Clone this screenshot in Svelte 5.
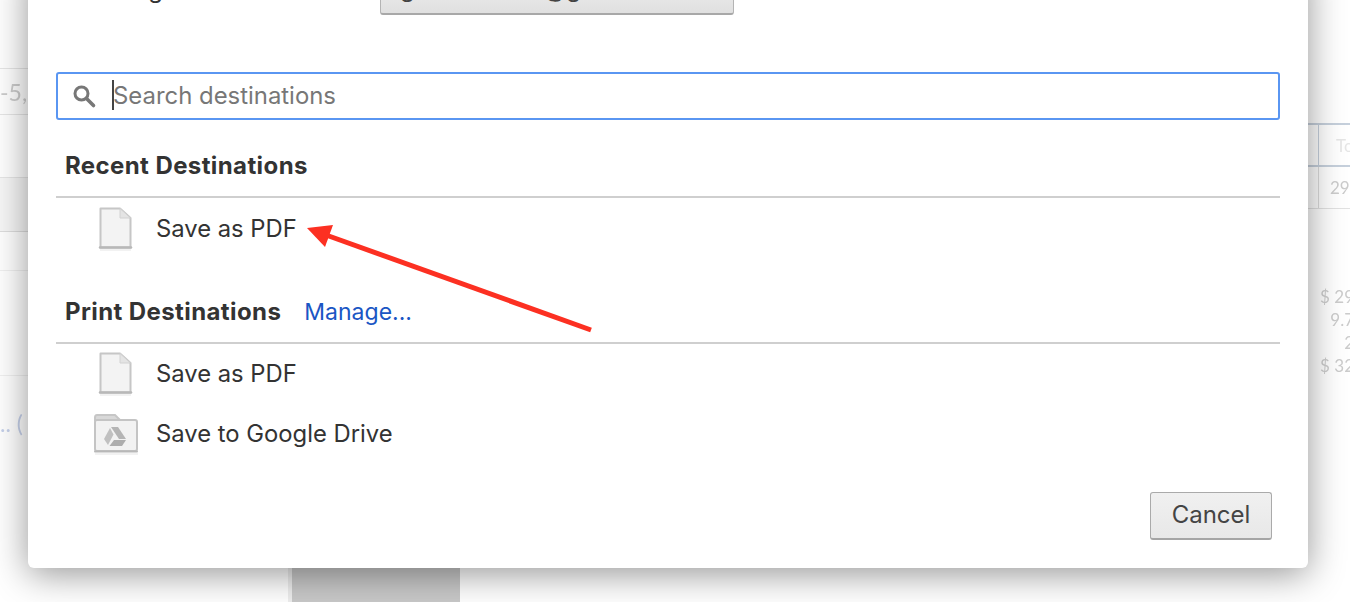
<script>
  const recent = [{ name: 'Save as PDF', icon: 'file' }]
  const printers = [
    { name: 'Save as PDF', icon: 'file' },
    { name: 'Save to Google Drive', icon: 'drive' }
  ]
</script>

{#snippet destIcon(kind)}
  {#if kind === 'file'}
    <svg class="icon" width="48" height="46" viewBox="0 0 48 46">
      <path d="M8.500 2.500H28L38.500 12V41.500H8.500Z" fill="#f3f3f3" stroke="#c6c6c6" stroke-width="2" stroke-linejoin="round" />
      <path d="M8 41.500H39" stroke="#b8b8b8" stroke-width="2.500" stroke-linecap="round" />
      <path d="M8 44H39" stroke="#eeeeee" stroke-width="1.500" />
      <path d="M28 2.500V12H38.500Z" fill="#e4e4e4" stroke="#d2d2d2" stroke-linejoin="round" />
    </svg>
  {:else}
    <svg class="icon" width="48" height="46" viewBox="0 0 48 46">
      <path d="M3 10V6.500Q3 4 5 4H23L28 9" fill="#d8d8d8" stroke="#c6c6c6" stroke-width="2" />
      <rect x="3" y="9" width="42" height="31" rx="2" fill="#f2f2f2" stroke="#c4c4c4" stroke-width="2" />
      <path d="M3 40.500H45" stroke="#b8b8b8" stroke-width="2" stroke-linecap="round" />
      <path d="M3 43H46" stroke="#eeeeee" stroke-width="1.500" />
      <path d="M19 16H26L34 28H27Z" fill="#b4b4b4" />
      <path d="M18 17L21.500 23.500L16 34L12 28Z" fill="#c0c0c0" />
      <path d="M17.500 35L22 29H34L30 35Z" fill="#adadad" />
    </svg>
  {/if}
{/snippet}

<div class="page">
  <div class="backdrop">
    <div class="bg-left">
      <div class="bg-row r1"></div>
      <div class="bg-row r2"><span>-5,</span></div>
      <div class="bg-row r3"></div>
      <div class="bg-row r4"></div>
      <div class="bg-row r5"></div>
      <div class="bg-row r6"></div>
      <div class="bg-link">.. (</div>
    </div>
    <div class="bg-right">
      <div class="bg-table">
        <div class="bg-cell head"><span>To</span></div>
        <div class="bg-cell"><span>29.</span></div>
      </div>
      <div class="bg-totals">
        <span>$ 29</span>
        <span>9.7</span>
        <span>2</span>
        <span>$ 32</span>
      </div>
    </div>
    <div class="bg-block"></div>
  </div>

  <div class="dialog">
    <div class="account">
      <span class="account-label">Showing destinations for</span>
      <button class="account-btn">gurikaarsero@gmail.com</button>
    </div>

    <div class="search">
      <svg class="search-icon" width="26" height="26" viewBox="0 0 26 26">
        <circle cx="10.500" cy="10.500" r="6.500" fill="none" stroke="#777" stroke-width="3" />
        <path d="M15.500 15.500L22.500 22.500" stroke="#777" stroke-width="3.600" stroke-linecap="round" />
      </svg>
      <span class="caret"></span>
      <span class="placeholder">Search destinations</span>
    </div>

    <section class="recent">
      <h2>Recent Destinations</h2>
      <ul>
        {#each recent as d}
          <li>{@render destIcon(d.icon)}<span>{d.name}</span></li>
        {/each}
      </ul>
    </section>

    <section class="print">
      <h2>Print Destinations <a href="#manage">Manage...</a></h2>
      <ul>
        {#each printers as d}
          <li>{@render destIcon(d.icon)}<span>{d.name}</span></li>
        {/each}
      </ul>
    </section>

    <div class="footer">
      <button class="cancel">Cancel</button>
    </div>
  </div>

  <svg class="arrow" width="300" height="120" viewBox="0 0 300 120">
    <path d="M285 105L20 10" stroke="#fc3022" stroke-width="5" />
    <path d="M1 3L27 0L19 22Z" fill="#fc3022" />
  </svg>
</div>

<style>
  :global(body) {
    margin: 0;
    background: #fff;
    overflow: hidden;
  }

  .page {
    position: relative;
    width: 1350px;
    height: 602px;
    overflow: hidden;
    font-family: Inter, "Liberation Sans", sans-serif;
    color: #333;
  }

  .backdrop {
    position: absolute;
    inset: 0;
    background: #fff;
    color: #ccc;
    filter: blur(0.4px);
  }

  .bg-left {
    width: 28px;
    overflow: hidden;
    white-space: nowrap;
    font-family: Lato, sans-serif;
    font-size: 23px;
  }

  .bg-row {
    box-sizing: border-box;
    border-bottom: 1px solid #e6e6e6;
  }

  .r1 { height: 69px; }
  .r2 { height: 46px; line-height: 46px; }
  .r3 { height: 63px; }
  .r4 { height: 54px; background: #f7f7f7; border-bottom-color: #dedede; }
  .r5 { height: 39px; border-bottom-color: #f0f0f0; }
  .r6 { height: 105px; border-bottom-color: #f0f0f0; }

  .bg-link {
    margin-top: 33px;
    color: #c5d0ea;
    line-height: 28px;
  }

  .bg-right {
    position: absolute;
    left: 1308px;
    top: 123px;
    width: 42px;
    overflow: hidden;
    font-family: Lato, sans-serif;
    font-size: 17px;
    white-space: nowrap;
  }

  .bg-table {
    display: flex;
    flex-direction: column;
  }

  .bg-cell {
    height: 42px;
    box-sizing: border-box;
    padding: 10px 0 0 22px;
    border-bottom: 1px solid #e2e2e2;
    background: linear-gradient(to right, transparent 10px, #dcdcdc 10px, #dcdcdc 11px, transparent 11px);
  }

  .bg-cell.head {
    height: 44px;
    padding-left: 28px;
    color: #e6e6e6;
    border-top: 2px solid #c6d0dc;
    border-bottom: 2px solid #c6d0dc;
    background: linear-gradient(to right, transparent 10px, #c6d0dc 10px, #c6d0dc 11px, transparent 11px);
  }

  .bg-totals {
    display: flex;
    flex-direction: column;
    align-items: flex-end;
    margin-top: 76px;
    margin-left: 12px;
    width: 34px;
    line-height: 23px;
  }

  .bg-block {
    position: absolute;
    left: 288px;
    top: 560px;
    width: 168px;
    height: 42px;
    background: #c9c9c9;
    border-left: 4px solid #eee;
  }

  .dialog {
    position: absolute;
    left: 28px;
    top: -40px;
    width: 1280px;
    height: 608px;
    box-sizing: border-box;
    padding: 0 28px;
    background: #fff;
    border-radius: 6px;
    box-shadow: 0 6px 36px rgba(0, 0, 0, 0.42);
    display: flex;
    flex-direction: column;
  }

  .account {
    display: flex;
    align-items: center;
    height: 44px;
    margin-top: 11px;
    padding-left: 9px;
    font-size: 24px;
  }

  .account-label {
    width: 315px;
    padding-bottom: 8px;
    color: #333;
    white-space: nowrap;
  }

  .account-btn {
    width: 354px;
    height: 44px;
    padding: 0 0 8px 19px;
    border: 1px solid #b4b4b4;
    border-bottom: 2px solid #a8a8a8;
    border-radius: 3px;
    background: linear-gradient(#f1f1f1, #e0e0e0);
    font: inherit;
    color: #444;
    text-align: left;
  }

  .search {
    display: flex;
    align-items: center;
    box-sizing: border-box;
    height: 48px;
    margin-top: 57px;
    padding-left: 13px;
    border: 2px solid #5a96f2;
    border-radius: 3px;
  }

  .search-icon {
    flex: none;
  }

  .caret {
    width: 2px;
    height: 30px;
    margin: 0 0 2px 15px;
    background: #444;
  }

  .placeholder {
    margin-left: -1px;
    padding-bottom: 2px;
    font-size: 23.900px;
    color: #777;
  }

  section h2 {
    margin: 0;
    padding: 0 9px 16px;
    font-size: 24px;
    font-weight: 700;
    letter-spacing: 0.400px;
    line-height: 28px;
    color: #333;
  }

  h2 a {
    margin-left: 17px;
    font-size: 23px;
    font-weight: 400;
    letter-spacing: 0;
    color: #1a56c4;
    text-decoration: none;
  }

  ul {
    list-style: none;
    margin: 0;
    padding: 0;
    border-top: 2px solid #cfcfcf;
  }

  li {
    display: flex;
    align-items: center;
    height: 60px;
    padding-left: 36px;
    font-size: 23.800px;
    line-height: 28px;
    color: #333;
  }

  li span {
    margin-left: 16px;
  }

  .recent {
    margin-top: 32px;
  }

  .recent li {
    height: 62px;
  }

  .print {
    margin-top: 38px;
  }

  .footer {
    display: flex;
    justify-content: flex-end;
    margin-top: 28px;
    padding-right: 8px;
  }

  .cancel {
    width: 122px;
    height: 48px;
    padding: 0 0 2px;
    border: 1px solid #aaa;
    border-bottom: 2px solid #a5a5a5;
    border-radius: 3px;
    background: linear-gradient(#f0f0f0, #e8e8e8);
    font: inherit;
    font-size: 24px;
    color: #444;
  }

  .arrow {
    position: absolute;
    left: 306px;
    top: 225px;
  }
</style>
